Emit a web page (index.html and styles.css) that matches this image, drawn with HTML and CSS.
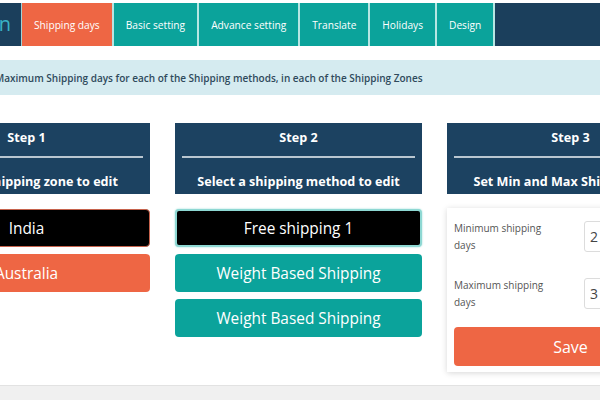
FILE: index.html
```html
<!DOCTYPE html>
<html>
<head>
<meta charset="utf-8">
<link rel="stylesheet" href="styles.css">
</head>
<body>
<div class="page">
  <nav class="nav">
    <div class="brand"><span>n</span></div>
    <a class="tab active">Shipping days</a>
    <a class="tab">Basic setting</a>
    <a class="tab">Advance setting</a>
    <a class="tab">Translate</a>
    <a class="tab">Holidays</a>
    <a class="tab">Design</a>
    <div class="nav-fill"></div>
  </nav>
  <div class="notice"><p>Set Minimum and Maximum Shipping days for each of the Shipping methods, in each of the Shipping Zones</p></div>
  <div class="steps">
    <section class="col">
      <header class="head">
        <div class="step">Step 1</div>
        <hr class="rule">
        <div class="sub">Select a shipping zone to edit</div>
      </header>
      <div class="list">
        <button class="btn sel-zone">India</button>
        <button class="btn orange">Australia</button>
      </div>
    </section>
    <section class="col">
      <header class="head">
        <div class="step">Step 2</div>
        <hr class="rule">
        <div class="sub">Select a shipping method to edit</div>
      </header>
      <div class="list">
        <button class="btn sel-method">Free shipping 1</button>
        <button class="btn teal">Weight Based Shipping</button>
        <button class="btn teal">Weight Based Shipping</button>
      </div>
    </section>
    <section class="col">
      <header class="head">
        <div class="step">Step 3</div>
        <hr class="rule">
        <div class="sub">Set Min and Max Shipping days</div>
      </header>
      <div class="card">
        <div class="row">
          <label class="lbl">Minimum shipping days</label>
          <input class="inp" value="2">
        </div>
        <div class="row">
          <label class="lbl">Maximum shipping days</label>
          <input class="inp" value="3">
        </div>
        <button class="btn orange save">Save</button>
      </div>
    </section>
  </div>
</div>
<div class="footer"></div>
</body>
</html>
```
FILE: styles.css
```css
html, body { margin: 0; padding: 0; }
body {
  background: #fff;
  font-family: "Open Sans", "Noto Sans", sans-serif;
  overflow: hidden;
  width: 600px;
  height: 400px;
  position: relative;
}
.page {
  margin-left: -97px;
  width: 794px;
  height: 386px;
  padding-top: 3px;
  box-sizing: border-box;
}
.nav {
  display: flex;
  height: 43px;
  background: #1b3f5c;
  margin-left: 97px;
}
.brand {
  width: 21px;
  overflow: hidden;
  display: flex;
  justify-content: flex-end;
  align-items: center;
  border-right: 1px solid #9fd3d6;
}
.brand span {
  color: #39b3c6;
  font-size: 20px;
  line-height: 1;
  margin-right: 10px;
  margin-top: -2px;
}
.tab {
  display: flex;
  align-items: center;
  padding: 0 12px;
  font-size: 10.2px;
  color: #fff;
  background: #0ba39b;
  border-right: 2px solid #b7e6e3;
}
.tab.active { background: #ee6644; }
.nav-fill { flex: 1; background: #1b3f5c; }
.notice {
  margin-top: 14px;
  height: 35px;
  background: #d5ebf0;
  display: flex;
  align-items: center;
}
.notice p {
  margin: 0 0 0 4px;
  font-size: 10px;
  font-weight: 600;
  color: #2f4a5c;
  white-space: nowrap;
}
.steps {
  display: grid;
  grid-template-columns: 247px 247px 247px;
  column-gap: 25px;
  margin-top: 28px;
}
.head {
  background: #1c4261;
  color: #fff;
  height: 71px;
  box-sizing: border-box;
  padding: 6px 7px 0;
  text-align: center;
  font-weight: 700;
  font-size: 12.6px;
}
.step { line-height: 18px; }
.rule {
  border: 0;
  height: 2px;
  background: #b9c6d0;
  margin: 9px 0 0;
}
.sub { line-height: 18px; margin-top: 15px; }
.list {
  display: flex;
  flex-direction: column;
  gap: 7px;
  margin-top: 15px;
}
.btn {
  height: 38px;
  border: 0;
  border-radius: 4px;
  color: #fff;
  font-family: inherit;
  font-size: 15.4px;
  padding: 0;
  text-align: center;
}
.sel-zone { background: #000; border: 1px solid #c6634d; }
.sel-method { background: #000; border: 2px solid #8ed8d3; box-shadow: 0 0 2px #8ed8d3; }
.orange { background: #ee6644; }
.teal { background: #0ba39b; }
.card {
  margin-top: 14px;
  background: #fff;
  box-shadow: 0 1px 6px rgba(0,0,0,0.16);
  padding: 13px 7px 6px;
  display: flex;
  flex-direction: column;
}
.row {
  display: flex;
  align-items: flex-start;
  height: 31px;
  margin-bottom: 26px;
}
.row + .row { margin-bottom: 18px; }
.lbl {
  width: 130px;
  flex: none;
  font-size: 10px;
  line-height: 17px;
  color: #555;
  margin-top: -1px;
  padding-right: 40px;
  box-sizing: border-box;
}
.inp {
  width: 100px;
  height: 31px;
  box-sizing: border-box;
  border: 1px solid #dcdcdc;
  border-radius: 3px;
  padding: 0 5px;
  font-family: inherit;
  font-size: 14px;
  color: #444;
}
.save { height: 39px; font-size: 16px; }
.footer {
  position: absolute;
  left: 0;
  right: 0;
  bottom: 0;
  height: 14px;
  background: #f0f0f0;
  border-top: 1px solid #e2e2e2;
}
```
